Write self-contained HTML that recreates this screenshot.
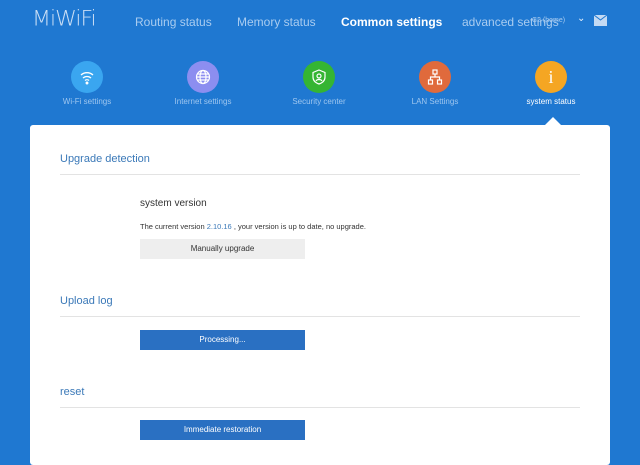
<!DOCTYPE html>
<html><head><meta charset="utf-8"><style>
body{margin:0;width:640px;height:450px;overflow:hidden;background:#1f78d1;font-family:"Liberation Sans",sans-serif;position:relative}
.a{position:absolute;white-space:nowrap}
.nav{color:#a9ccf0;font-size:12px;top:15px}
.ic{position:absolute;width:32px;height:32px;border-radius:50%;top:61px}
.ic svg{position:absolute;left:8px;top:8px}
.lb{position:absolute;top:97px;font-size:8px;color:#9ec6ef;text-align:center;width:100px}
.card{position:absolute;left:30px;top:125px;width:580px;height:340px;background:#fff;border-radius:3px}
.h{position:absolute;left:30px;font-size:11px;color:#3b79b8}
.line{position:absolute;left:30px;width:520px;height:1px;background:#e3e3e3}
.btn{position:absolute;left:110px;width:165px;height:20px;font-size:8px;text-align:center;line-height:20px}
</style></head><body>
<div class="a" style="left:32px;top:7px;font-size:22px;color:#c9def5;font-family:'DejaVu Sans',sans-serif;font-weight:200;letter-spacing:-1px;transform:scaleY(0.95)">MiWiFi</div>
<div class="a nav" style="left:135px">Routing status</div>
<div class="a nav" style="left:237px">Memory status</div>
<div class="a nav" style="left:341px;color:#fff;font-weight:bold">Common settings</div>
<div class="a nav" style="left:462px">advanced settings</div>
<div class="a" style="left:532px;top:17px;font-size:7px;color:#a9ccf0">C2 (home)</div>
<div class="a" style="left:577px;top:13px;font-size:10px;color:#e6f0fb">⌄</div>
<svg class="a" style="left:594px;top:15px" width="13" height="11"><rect x="0" y="0" width="13" height="11" fill="#c4daf3"/><path d="M0 0L6.5 5L13 0" stroke="#1f78d1" fill="none"/></svg>
<div class="ic" style="left:71px;background:#3aa6f0"><svg width="16" height="16" fill="none" stroke="#fff" stroke-width="1.3"><path d="M2 6a9 9 0 0 1 12 0M4 9a6 6 0 0 1 8 0M6 11.5a3 3 0 0 1 4 0"/><circle cx="8" cy="14" r=".8" fill="#fff"/></svg></div>
<div class="ic" style="left:187px;background:#8c8ef0"><svg width="16" height="16" fill="none" stroke="#fff" stroke-width="1.2"><circle cx="8" cy="8" r="6.5"/><ellipse cx="8" cy="8" rx="3" ry="6.5"/><path d="M1.5 8h13M2.5 5h11M2.5 11h11"/></svg></div>
<div class="ic" style="left:303px;background:#35b532"><svg width="16" height="16" fill="none" stroke="#fff" stroke-width="1.2"><path d="M8 1L14 3.5V8c0 4-3 6-6 7C5 14 2 12 2 8V3.5z"/><circle cx="8" cy="7" r="2"/><path d="M5 12c1-2 5-2 6 0"/></svg></div>
<div class="ic" style="left:419px;background:#e06a3c"><svg width="16" height="16" fill="none" stroke="#fff" stroke-width="1.2"><rect x="6" y="1" width="4" height="4"/><rect x="1.5" y="11" width="4" height="4"/><rect x="10.5" y="11" width="4" height="4"/><path d="M8 5v3M3.5 11V8h9v3"/></svg></div>
<div class="ic" style="left:535px;background:#f5a623;color:#fff;text-align:center;line-height:32px;font-size:18px;font-family:'Liberation Serif',serif">i</div>
<div class="lb" style="left:37px">Wi-Fi settings</div>
<div class="lb" style="left:153px">Internet settings</div>
<div class="lb" style="left:269px">Security center</div>
<div class="lb" style="left:385px">LAN Settings</div>
<div class="lb" style="left:501px;color:#fff">system status</div>
<div class="a" style="left:545px;top:117px;width:0;height:0;border:8px solid transparent;border-bottom-color:#fff;border-top:0"></div>
<div class="card">
<div class="h" style="top:28px">Upgrade detection</div>
<div class="line" style="top:49px"></div>
<div class="a" style="left:110px;top:73px;font-size:10px;color:#333">system version</div>
<div class="a" style="left:110px;top:97px;font-size:7.5px;color:#333">The current version <span style="color:#3b79b8">2.10.16</span> , your version is up to date, no upgrade.</div>
<div class="btn" style="top:114px;background:#eee;color:#333">Manually upgrade</div>
<div class="h" style="top:170px">Upload log</div>
<div class="line" style="top:191px"></div>
<div class="btn" style="top:205px;background:#2a70c2;color:#fff">Processing...</div>
<div class="h" style="top:261px">reset</div>
<div class="line" style="top:282px"></div>
<div class="btn" style="top:295px;background:#2a70c2;color:#fff">Immediate restoration</div>
</div>
</body></html>
